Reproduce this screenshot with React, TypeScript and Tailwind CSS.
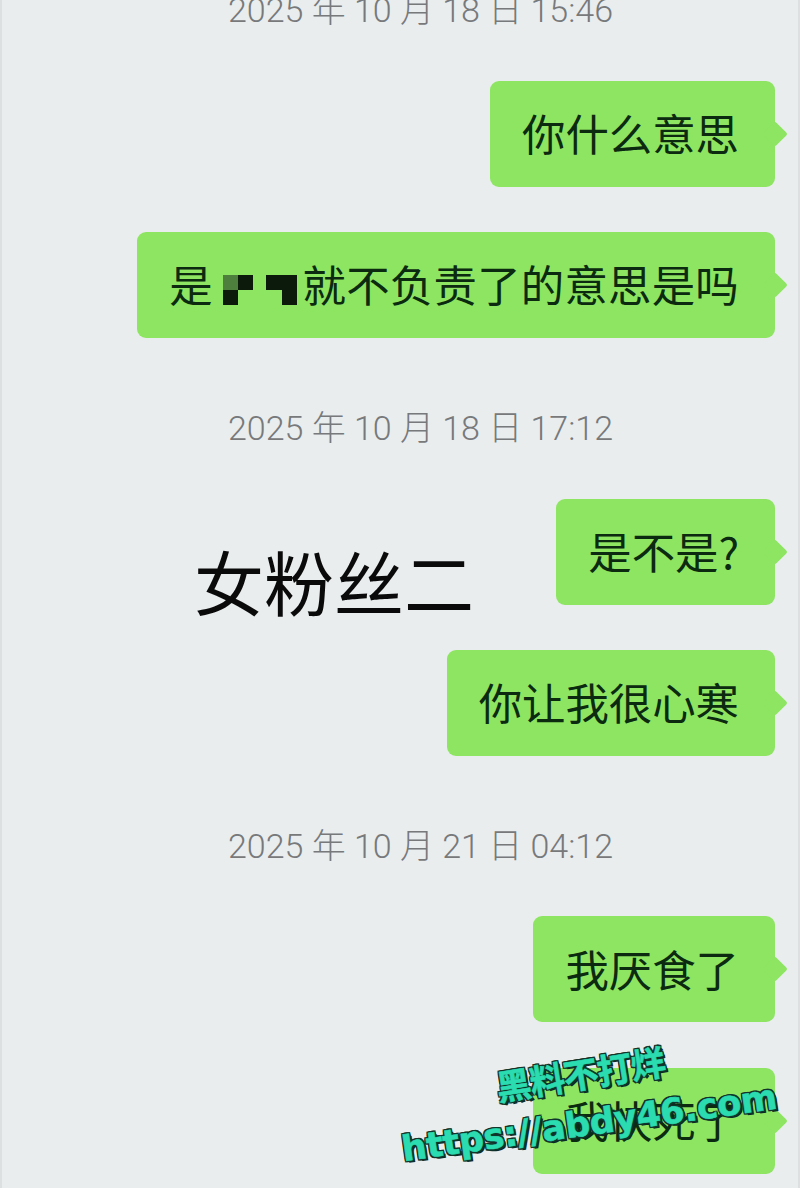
const cjk = "font-['Noto_Sans_CJK_SC',sans-serif]";
const mark =
  "text-[#2bdcb0] [-webkit-text-stroke:0.6px_#2bdcb0] [text-shadow:1.5px_0_0_#10352c,-1.5px_0_0_#10352c,0_1.5px_0_#10352c,0_-1.5px_0_#10352c,1.5px_1.5px_0_#10352c,-1.5px_1.5px_0_#10352c,1.5px_-1.5px_0_#10352c,-1.5px_-1.5px_0_#10352c,2.5px_2.5px_0_#0c2a24]";

function Bubble({ children }: { children: React.ReactNode }) {
  return (
    <div className="relative flex h-[106px] items-center self-end rounded-[9px] bg-[#8de561] pr-[36px] pb-[2px] pl-[32px] text-[43.4px] leading-none whitespace-nowrap text-[#0b2a10]">
      {children}
      <div className="absolute top-[44px] right-[-9px] size-[18px] rotate-45 rounded-[2px] bg-[#8de561]" />
    </div>
  );
}

function Time({ children }: { children: React.ReactNode }) {
  return (
    <div className="mt-[20px] flex h-[50px] items-center justify-center pl-[64px] font-['Roboto','Noto_Sans_CJK_SC',sans-serif] text-[34px] leading-none font-light whitespace-pre text-[#77797b]">
      {children}
    </div>
  );
}

// the two blacked out characters in the second message
function Mosaic() {
  return (
    <span className="mr-[6px] ml-[10px] flex translate-y-[6px] items-center gap-[13px]">
      <svg width="30" height="30" viewBox="0 0 30 30">
        <rect x="0" y="0" width="15" height="15" fill="#4f7f3d" />
        <rect x="15" y="0" width="15" height="15" fill="#0c1a0c" />
        <rect x="0" y="15" width="15" height="15" fill="#0c1a0c" />
      </svg>
      <svg width="31" height="30" viewBox="0 0 31 30">
        <rect x="0" y="0" width="31" height="15" fill="#0c1a0c" />
        <rect x="16" y="15" width="15" height="15" fill="#0c1a0c" />
      </svg>
    </span>
  );
}

export default function App() {
  return (
    <main className={`relative h-[1188px] w-[800px] overflow-hidden border-x-2 border-[#dde0e1] bg-[#e9edee] ${cjk}`}>
      <div className="-mt-[34.6px] flex flex-col gap-[45.3px] pr-[23px]">
        <Time>2025 年 10 月 18 日 15:46</Time>
        <Bubble>你什么意思</Bubble>
        <Bubble>
          是<Mosaic />
          <span className="tracking-[0.25px]">就不负责了的意思是吗</span>
        </Bubble>
        <Time>2025 年 10 月 18 日 17:12</Time>
        <Bubble>是不是?</Bubble>
        <Bubble>你让我很心寒</Bubble>
        <Time>2025 年 10 月 21 日 04:12</Time>
        <Bubble>我厌食了</Bubble>
        <Bubble>我快死了</Bubble>
      </div>

      <div className="absolute top-[539px] left-[192px] text-[70px] leading-[84px] text-[#0a0a0a]">女粉丝二</div>

      {/* watermark */}
      <div className={`absolute top-[1051px] left-[493px] -rotate-[9deg] text-[35px] leading-[44px] font-bold tracking-[-1px] ${mark}`}>
        黑料不打烊
      </div>
      <div className={`absolute top-[1099px] left-[398px] -rotate-[8deg] font-['DejaVu_Sans'] text-[35px] leading-[48px] font-bold tracking-[-0.3px] whitespace-nowrap ${mark}`}>
        https://abdy46.com
      </div>
    </main>
  );
}
